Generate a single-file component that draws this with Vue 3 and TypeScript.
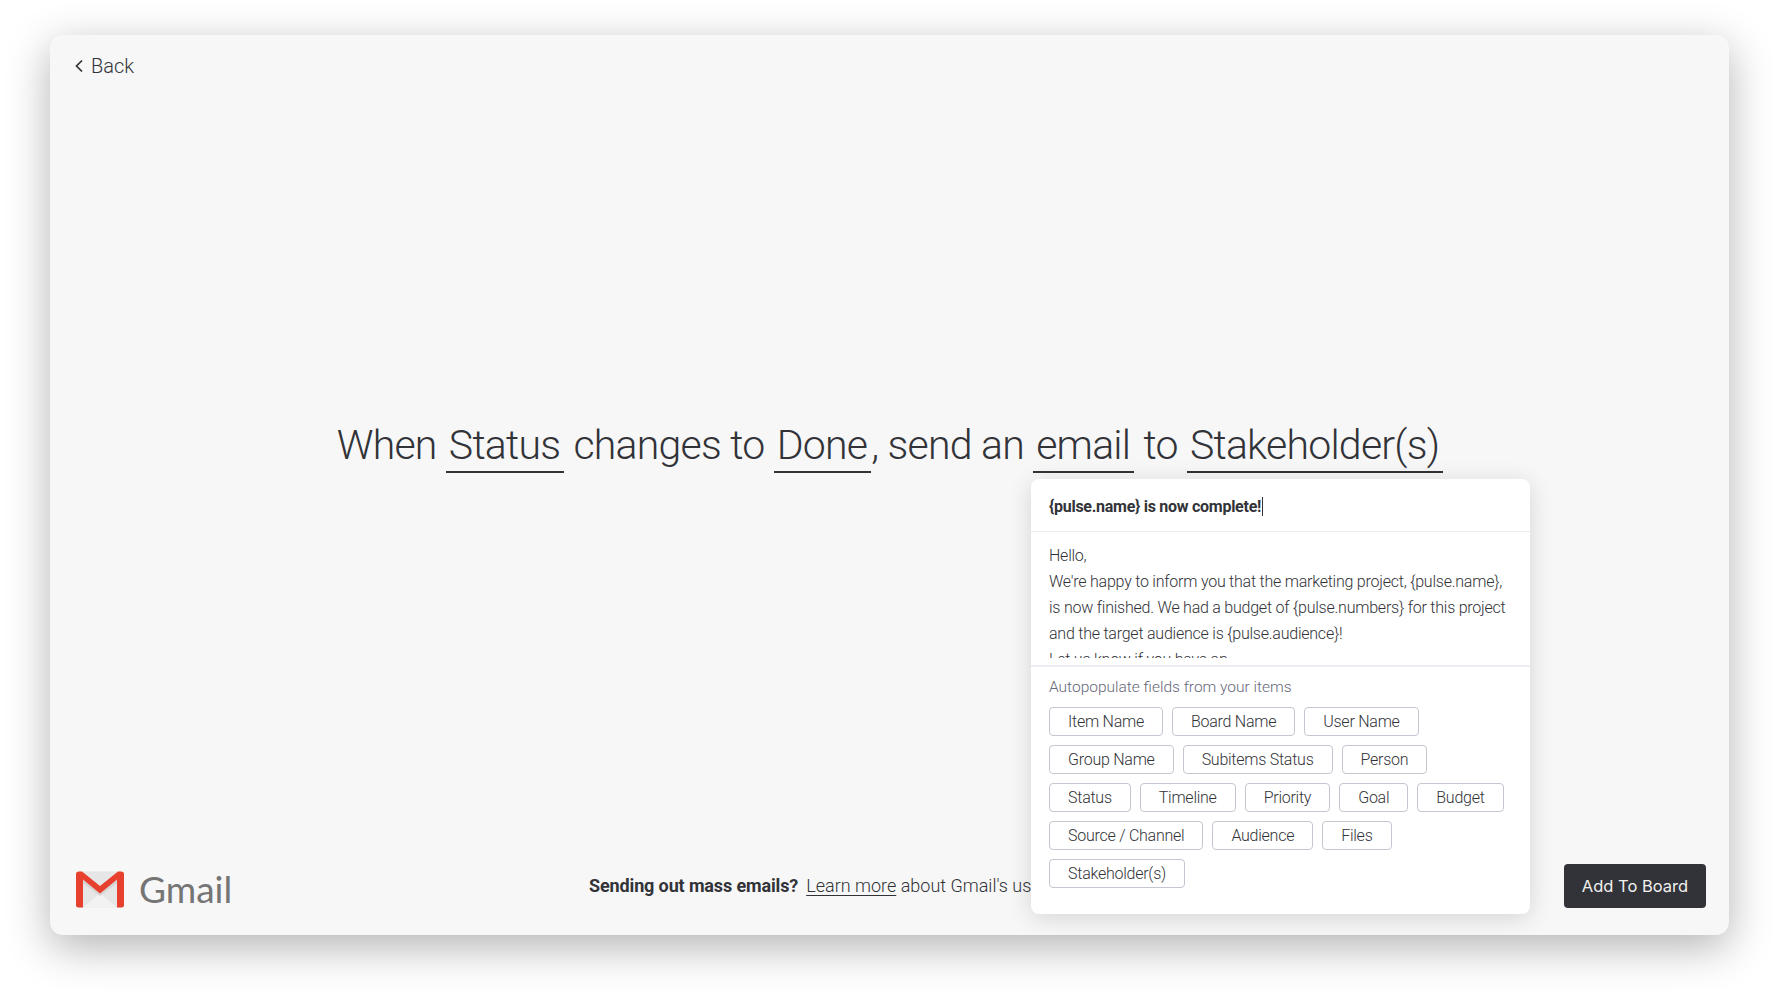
<script setup lang="ts">
const chipRows: string[][] = [
  ['Item Name', 'Board Name', 'User Name'],
  ['Group Name', 'Subitems Status', 'Person'],
  ['Status', 'Timeline', 'Priority', 'Goal', 'Budget'],
  ['Source / Channel', 'Audience', 'Files'],
  ['Stakeholder(s)'],
]
</script>

<template>
  <div class="stage">
    <section class="card">
      <header class="top">
        <svg class="chev" width="10" height="14" viewBox="0 0 10 14" aria-hidden="true">
          <path d="M8 1.5 L2.5 7 L8 12.5" fill="none" stroke="#323338" stroke-width="1.7" />
        </svg>
        <span class="back">Back</span>
      </header>

      <main class="hero">
        <h1 class="sentence">
          When <span class="pick">Status</span> changes to <span class="pick">Done</span>, send an
          <span class="pick">email</span> to <span class="pick">Stakeholder(s)</span>
        </h1>
      </main>

      <footer class="bottom">
        <div class="brand">
          <svg class="logo" width="50" height="37" viewBox="0 0 50 37" aria-hidden="true">
            <rect x="2" y="0.5" width="46" height="36" rx="1" fill="#e6e6e6" />
            <path d="M8 36.5 L25 22 L42 36.5 Z" fill="#f2f2f2" />
            <path d="M8 8 L25 22 L25 25 L8 12 Z" fill="#d4d4d4" />
            <path d="M42 8 L25 22 L25 25 L42 12 Z" fill="#d4d4d4" />
            <path d="M1 3 Q1 0.5 4 0.5 L7 0.5 L25 15 L43 0.5 L46 0.5 Q49 0.5 49 3 L49 34 Q49 36.5 46.5 36.5 L42 36.5 L42 8.5 L25 22.5 L8 8.5 L8 36.5 L3.5 36.5 Q1 36.5 1 34 Z" fill="#e8402f" />
          </svg>
          <span class="wordmark">Gmail</span>
        </div>
        <p class="notice">
          <strong>Sending out mass emails?</strong>
          <a class="learn">Learn more</a> about Gmail's usage limits
        </p>
        <button class="add" type="button">Add To Board</button>
      </footer>

      <aside class="popup">
        <div class="subject">{pulse.name} is now complete!<i class="caret"></i></div>
        <div class="body">
          <div class="body-text">
            <p>Hello,</p>
            <p>We're happy to inform you that the marketing project, {pulse.name}, is now finished. We had a budget of {pulse.numbers} for this project and the target audience is {pulse.audience}!</p>
            <p>Let us know if you have an</p>
          </div>
        </div>
        <div class="fields">
          <div class="fields-title">Autopopulate fields from your items</div>
          <div v-for="(row, i) in chipRows" :key="i" class="chips">
            <span v-for="c in row" :key="c" class="chip">{{ c }}</span>
          </div>
        </div>
      </aside>
    </section>
  </div>
</template>

<style scoped>
.stage {
  width: 1779px;
  height: 1000px;
  box-sizing: border-box;
  padding: 35px 50px 65px;
  background: #fff;
  overflow: hidden;
  font-family: Roboto, "Liberation Sans", sans-serif;
  color: #323338;
}
.card {
  position: relative;
  height: 100%;
  width: 1679px;
  display: flex;
  flex-direction: column;
  background: #f7f7f7;
  border-radius: 13px;
  box-shadow: 0 12px 44px rgba(0, 0, 0, 0.3);
  padding: 0 23px 28px 24px;
  box-sizing: border-box;
}
.top {
  display: flex;
  align-items: center;
  gap: 7px;
  height: 62px;
}
.chev {
  flex: none;
}
.back {
  font-size: 20px;
  font-weight: 300;
}
.hero {
  flex: 1;
  display: flex;
  justify-content: center;
  padding-top: 319px;
}
.sentence {
  margin: 0;
  font-size: 41px;
  line-height: 58px;
  height: 58px;
  font-weight: 300;
  letter-spacing: -0.77px;
  white-space: nowrap;
}
.pick {
  display: inline-block;
  padding: 0 4px 0 3px;
  line-height: 51px;
  border-bottom: 2px solid #323338;
}
.bottom {
  display: flex;
  align-items: center;
  height: 44px;
}
.brand {
  display: flex;
  align-items: center;
  gap: 14px;
  width: 515px;
  padding: 8px 0 0 1px;
  box-sizing: border-box;
}
.logo {
  flex: none;
}
.wordmark {
  font-family: Lato, sans-serif;
  font-size: 37px;
  line-height: 40px;
  color: #757575;
}
.notice {
  margin: 0;
  flex: 1;
  font-size: 18px;
  font-weight: 300;
  white-space: nowrap;
  overflow: hidden;
}
.notice strong {
  font-weight: 700;
  letter-spacing: -0.13px;
  margin-right: 8px;
}
.learn {
  text-decoration: underline;
  text-underline-offset: 3px;
}
.add {
  flex: none;
  align-self: flex-start;
  margin-top: 1px;
  width: 142px;
  height: 44px;
  border: 0;
  border-radius: 4px;
  background: #323338;
  color: #f0f0f0;
  font-family: Inter, Roboto, sans-serif;
  font-size: 16.5px;
  padding: 0;
}
.popup {
  position: absolute;
  left: 981px;
  top: 444px;
  width: 499px;
  height: 435px;
  background: #fff;
  border-radius: 8px;
  box-shadow: 0 4px 24px rgba(0, 0, 0, 0.14);
  display: flex;
  flex-direction: column;
  overflow: hidden;
}
.subject {
  height: 53px;
  box-sizing: border-box;
  padding: 2px 0 0 18px;
  display: flex;
  align-items: center;
  font-size: 16px;
  font-weight: 700;
  letter-spacing: -0.27px;
  border-bottom: 1px solid #ebebf3;
  flex: none;
}
.caret {
  display: inline-block;
  width: 1px;
  height: 19px;
  background: #323338;
  margin-left: 1px;
}
.body {
  height: 133px;
  box-sizing: border-box;
  padding: 11px 18px 0;
  font-size: 16px;
  line-height: 26px;
  font-weight: 300;
  letter-spacing: -0.23px;
  flex: none;
}
.body-text {
  height: 115px;
  overflow: hidden;
}
.body p {
  margin: 0;
}
.fields {
  border-top: 2px solid #ebeff5;
  padding: 10px 18px 0;
}
.fields-title {
  font-size: 15.5px;
  line-height: 20px;
  font-weight: 300;
  color: #676879;
  margin-bottom: 10px;
}
.chips {
  display: flex;
  gap: 9px;
  margin-bottom: 9px;
}
.chip {
  box-sizing: border-box;
  height: 29px;
  display: flex;
  align-items: center;
  padding: 0 18px 1px;
  border: 1px solid #c5c7d0;
  border-radius: 4px;
  font-size: 16px;
  font-weight: 300;
  letter-spacing: -0.25px;
  color: #323338;
}
</style>
